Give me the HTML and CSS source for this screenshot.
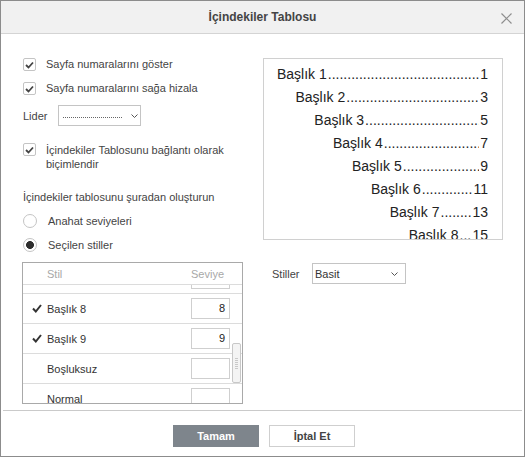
FILE: index.html
```html
<!DOCTYPE html>
<html lang="tr">
<head>
<meta charset="utf-8">
<title>İçindekiler Tablosu</title>
<link rel="stylesheet" href="styles.css">
</head>
<body>
<div class="dialog">
  <div class="titlebar">
    <span class="title">İçindekiler Tablosu</span>
    <svg class="close" width="11" height="11" viewBox="0 0 11 11"><path d="M0.5 0.5L10.5 10.5M10.5 0.5L0.5 10.5" stroke="#8e8e8e" stroke-width="1.2" fill="none"/></svg>
  </div>
  <div class="content">
    <div class="left">
      <div class="chk">
        <span class="cb"><svg width="9" height="8" viewBox="0 0 9 8"><path d="M1 4L3.5 6.5L8 1.5" stroke="#444" stroke-width="1.8" fill="none"/></svg></span>
        <span class="lbl">Sayfa numaralarını göster</span>
      </div>
      <div class="chk r2">
        <span class="cb"><svg width="9" height="8" viewBox="0 0 9 8"><path d="M1 4L3.5 6.5L8 1.5" stroke="#444" stroke-width="1.8" fill="none"/></svg></span>
        <span class="lbl">Sayfa numaralarını sağa hizala</span>
      </div>
      <div class="lider">
        <span class="lider-lbl">Lider</span>
        <div class="select lider-sel">
          <span class="dotline"></span>
          <svg class="chev" width="7" height="4" viewBox="0 0 7 4"><path d="M0.5 0.5L3.5 3.5L6.5 0.5" stroke="#555" stroke-width="1" fill="none"/></svg>
        </div>
      </div>
      <div class="chk r3">
        <span class="cb"><svg width="9" height="8" viewBox="0 0 9 8"><path d="M1 4L3.5 6.5L8 1.5" stroke="#444" stroke-width="1.8" fill="none"/></svg></span>
        <span class="lbl multi">İçindekiler Tablosunu bağlantı olarak<br>biçimlendir</span>
      </div>
      <div class="section">İçindekiler tablosunu şuradan oluşturun</div>
      <div class="rad r-first"><span class="radio"></span><span class="lbl">Anahat seviyeleri</span></div>
      <div class="rad"><span class="radio on"></span><span class="lbl">Seçilen stiller</span></div>
      <div class="table">
        <div class="thead"><span class="th-stil">Stil</span><span class="th-sev">Seviye</span></div>
        <div class="tscroll">
          <div class="tlist">
            <div class="trow"><span class="tick"><svg width="10" height="9" viewBox="0 0 10 9"><path d="M1 4.5L3.8 7.5L9 1" stroke="#333" stroke-width="2" fill="none"/></svg></span><span class="tname">Başlık 7</span><span class="tin">7</span></div>
            <div class="trow"><span class="tick"><svg width="10" height="9" viewBox="0 0 10 9"><path d="M1 4.5L3.8 7.5L9 1" stroke="#333" stroke-width="2" fill="none"/></svg></span><span class="tname">Başlık 8</span><span class="tin">8</span></div>
            <div class="trow"><span class="tick"><svg width="10" height="9" viewBox="0 0 10 9"><path d="M1 4.5L3.8 7.5L9 1" stroke="#333" stroke-width="2" fill="none"/></svg></span><span class="tname">Başlık 9</span><span class="tin">9</span></div>
            <div class="trow"><span class="tick"></span><span class="tname">Boşluksuz</span><span class="tin"></span></div>
            <div class="trow"><span class="tick"></span><span class="tname">Normal</span><span class="tin"></span></div>
          </div>
          <div class="thumb"></div>
        </div>
      </div>
    </div>
    <div class="right">
      <div class="toc">
        <div class="tl l1"><span class="tt">Başlık 1</span><span class="dots">..............................................................................</span><span class="pn">1</span></div>
        <div class="tl l2"><span class="tt">Başlık 2</span><span class="dots">..............................................................................</span><span class="pn">3</span></div>
        <div class="tl l3"><span class="tt">Başlık 3</span><span class="dots">..............................................................................</span><span class="pn">5</span></div>
        <div class="tl l4"><span class="tt">Başlık 4</span><span class="dots">..............................................................................</span><span class="pn">7</span></div>
        <div class="tl l5"><span class="tt">Başlık 5</span><span class="dots">..............................................................................</span><span class="pn">9</span></div>
        <div class="tl l6"><span class="tt">Başlık 6</span><span class="dots">..............................................................................</span><span class="pn">11</span></div>
        <div class="tl l7"><span class="tt">Başlık 7</span><span class="dots">..............................................................................</span><span class="pn">13</span></div>
        <div class="tl l8"><span class="tt">Başlık 8</span><span class="dots">..............................................................................</span><span class="pn">15</span></div>
      </div>
      <div class="stiller">
        <span class="stiller-lbl">Stiller</span>
        <div class="select stiller-sel">
          <span class="sel-val">Basit</span>
          <svg class="chev" width="7" height="4" viewBox="0 0 7 4"><path d="M0.5 0.5L3.5 3.5L6.5 0.5" stroke="#555" stroke-width="1" fill="none"/></svg>
        </div>
      </div>
    </div>
  </div>
  <div class="footer">
    <button class="btn primary">Tamam</button>
    <button class="btn">İptal Et</button>
  </div>
</div>
</body>
</html>
```
FILE: styles.css
```css
html, body {
  margin: 0;
  padding: 0;
  background: #fff;
}
body {
  font-family: "Liberation Sans", Arial, sans-serif;
  font-size: 11px;
  color: #444;
}
.dialog {
  width: 525px;
  height: 457px;
  box-sizing: border-box;
  border: 1px solid #8c8c8c;
  display: flex;
  flex-direction: column;
  background: #fff;
}
.titlebar {
  height: 33px;
  flex: none;
  box-sizing: border-box;
  background: #f1f1f1;
  border-bottom: 1px solid #d4d4d4;
  display: grid;
  grid-template-columns: 1fr auto 1fr;
  align-items: center;
}
.title {
  grid-column: 2;
  font-size: 12px;
  font-weight: bold;
  color: #444;
}
.close {
  grid-column: 3;
  justify-self: end;
  margin-right: 12px;
  margin-top: 2px;
}
.content {
  flex: 1;
  display: flex;
  padding-left: 21px;
  gap: 20px;
}
.left {
  width: 221px;
  padding-top: 24px;
  display: flex;
  flex-direction: column;
}
.chk {
  display: flex;
  align-items: flex-start;
  margin-left: 1px;
  line-height: 13px;
}
.cb {
  width: 13px;
  height: 13px;
  box-sizing: border-box;
  border: 1px solid #c4c4c4;
  border-radius: 2px;
  flex: none;
  margin-right: 10px;
  display: flex;
  align-items: center;
  justify-content: center;
  background: #fff;
}
.r2 { margin-top: 11px; }
.lider {
  margin-top: 10px;
  margin-left: 1px;
  display: flex;
  align-items: center;
  height: 21px;
}
.lider-lbl { width: 35px; }
.select {
  height: 21px;
  box-sizing: border-box;
  border: 1px solid #c4c4c4;
  display: flex;
  align-items: center;
  background: #fff;
}
.lider-sel {
  width: 83px;
  padding-left: 4px;
}
.dotline {
  width: 59px;
  height: 0;
  border-bottom: 1px dotted #666;
  margin-top: 4px;
}
.lider-sel .chev { margin-left: 9px; }
.r3 { margin-top: 17px; }
.multi { line-height: 14px; }
.section {
  margin-top: 19px;
  margin-left: 1px;
  line-height: 14px;
}
.rad {
  display: flex;
  align-items: center;
  margin-top: 10px;
  margin-left: 1px;
  height: 14px;
}
.radio {
  width: 14px;
  height: 14px;
  box-sizing: border-box;
  border: 1px solid #c4c4c4;
  border-radius: 50%;
  margin-right: 11px;
  background: #fff;
  flex: none;
}
.radio.on {
  background: radial-gradient(circle at center, #2e2e2e 0, #2e2e2e 3.6px, #fff 4.3px);
}
.table {
  margin-top: 10px;
  height: 142px;
  box-sizing: border-box;
  border: 1px solid #a9a9a9;
  display: flex;
  flex-direction: column;
}
.thead {
  height: 21px;
  flex: none;
  border-bottom: 1px solid #dcdcdc;
  display: flex;
  align-items: center;
  color: #a8a8a8;
}
.th-stil { margin-left: 24px; width: 144px; }
.tscroll {
  flex: 1;
  overflow: hidden;
  position: relative;
}
.tlist { margin-top: -21px; }
.trow {
  height: 29px;
  border-bottom: 1px solid #dcdcdc;
  display: flex;
  align-items: center;
  color: #333;
}
.tick {
  width: 10px;
  margin-left: 9px;
  margin-right: 5px;
  display: flex;
  align-items: center;
}
.tname { flex: 1; }
.tin {
  width: 39px;
  height: 21px;
  box-sizing: border-box;
  border: 1px solid #cfcfcf;
  margin-right: 12px;
  text-align: right;
  padding-right: 4px;
  line-height: 19px;
  color: #222;
  background: #fff;
}
.thumb {
  position: absolute;
  right: 1px;
  top: 58px;
  width: 9px;
  height: 40px;
  box-sizing: border-box;
  border: 1px solid #c8c8c8;
  border-radius: 2px;
  background:
    repeating-linear-gradient(to bottom, #c9c9c9 0, #c9c9c9 1px, transparent 1px, transparent 2px) center / 3px 11px no-repeat,
    #f4f4f4;
}
.right {
  padding-top: 24px;
  display: flex;
  flex-direction: column;
}
.toc {
  width: 240px;
  height: 182px;
  box-sizing: border-box;
  border: 1px solid #d0d0d0;
  overflow: hidden;
  padding: 3.5px 14px 0 13px;
}
.tl {
  display: flex;
  font-size: 14px;
  line-height: 23px;
  color: #222;
  white-space: nowrap;
}
.tt { flex: none; }
.dots {
  flex: 1;
  overflow: hidden;
  min-width: 0;
  margin: 0 1px;
}
.pn { flex: none; }
.l2 { padding-left: 18.5px; }
.l3 { padding-left: 37.3px; }
.l4 { padding-left: 56px; }
.l5 { padding-left: 75px; }
.l6 { padding-left: 94px; }
.l7 { padding-left: 112.7px; }
.l8 { padding-left: 131.7px; }
.stiller {
  margin-top: 23px;
  display: flex;
  align-items: center;
}
.stiller-lbl {
  margin-left: 9px;
  width: 40px;
}
.stiller-sel {
  width: 94px;
  padding-left: 2px;
  padding-right: 7px;
}
.sel-val { flex: 1; color: #333; }
.footer {
  height: 46px;
  flex: none;
  box-sizing: border-box;
  border-top: 1px solid #cacaca;
  margin: 0 2px;
  padding-top: 14px;
  padding-left: 3px;
  display: flex;
  justify-content: center;
  gap: 10px;
}
.btn {
  width: 86px;
  height: 22px;
  box-sizing: border-box;
  font-family: "Liberation Sans", Arial, sans-serif;
  font-size: 11px;
  font-weight: bold;
  color: #444;
  background: #fff;
  border: 1px solid #cfcfcf;
  border-radius: 0;
  padding: 0;
}
.btn.primary {
  background: #7e858c;
  border-color: #7e858c;
  color: #fff;
}
```
